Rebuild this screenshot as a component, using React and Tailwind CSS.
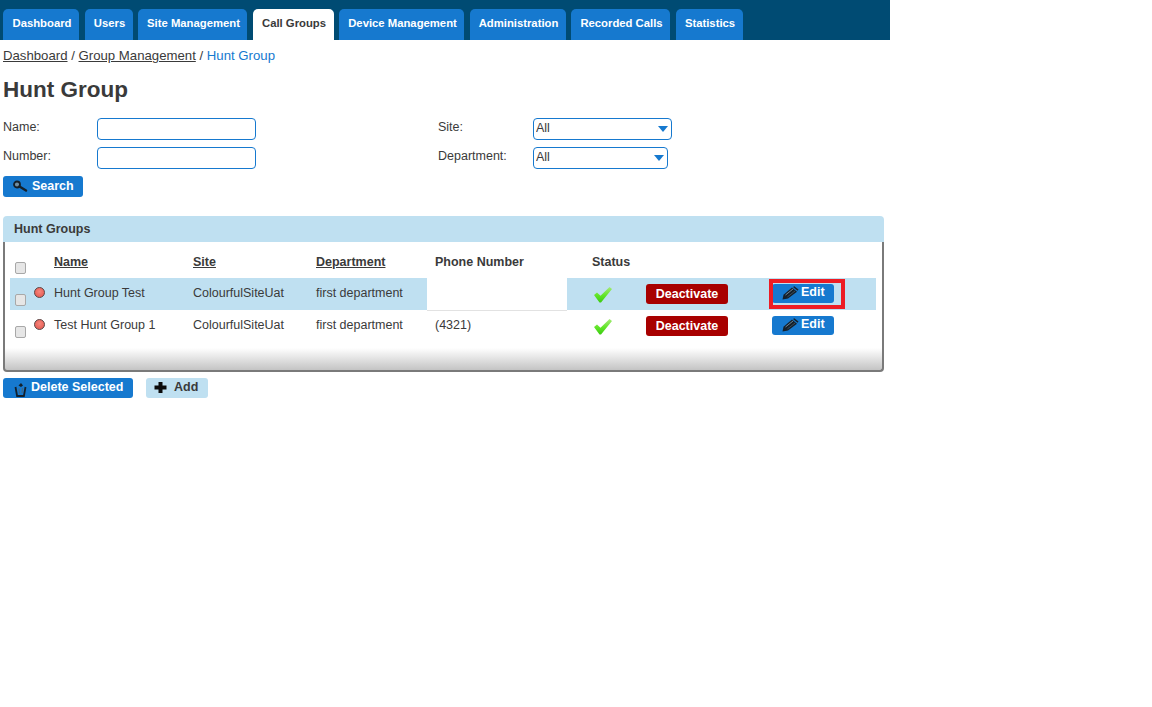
import React from 'react';

const tabs = [
  { label: 'Dashboard', width: 'w-[76px]' },
  { label: 'Users', width: 'w-[48px]' },
  { label: 'Site Management', width: 'w-[109px]' },
  { label: 'Call Groups', width: 'w-[81px]', active: true },
  { label: 'Device Management', width: 'w-[125px]' },
  { label: 'Administration', width: 'w-[96px]' },
  { label: 'Recorded Calls', width: 'w-[99px]' },
  { label: 'Statistics', width: 'w-[67px]' },
];

const rows = [
  { name: 'Hunt Group Test', site: 'ColourfulSiteUat', dept: 'first department', phone: '', selected: true },
  { name: 'Test Hunt Group 1', site: 'ColourfulSiteUat', dept: 'first department', phone: '(4321)' },
];

const SearchIcon = () => (
  <svg width="16" height="12" viewBox="0 0 16 12" className="shrink-0">
    <circle cx="5" cy="4.500" r="3" fill="#6f8ea3" stroke="#14202a" strokeWidth="1.800" />
    <path d="M7.500 6.500l6.500 4" stroke="#14202a" strokeWidth="2.400" strokeLinecap="round" />
  </svg>
);

const PencilIcon = () => (
  <svg width="17" height="14" viewBox="0 0 17 14" className="shrink-0">
    <path d="M.5 13.500l1-4.800L10 1.500l5 4.200L6 12.500z" fill="#15202b" />
    <path d="M11 .9l1.300-.7 4.200 3.300-1 1.300z" fill="#15202b" />
    <path d="M3.500 9l7.500-6" stroke="#7c93a4" strokeWidth="0.900" />
    <path d="M5.500 10.800l7.500-5.800" stroke="#4c6374" strokeWidth="0.700" />
  </svg>
);

const TrashIcon = () => (
  <svg width="13" height="15" viewBox="0 0 13 15" className="shrink-0 mt-[3px]">
    <path d="M1.500 5l1.600 9h6.800l1.600-9" fill="none" stroke="#13202c" strokeWidth="1.800" />
    <path d="M5 6.500l.5 5M8.500 6l-.5 5" stroke="#4b6476" strokeWidth="1" />
    <path d="M4.500 3.500L7 1l2 2.500-2 1.500z" fill="#13202c" />
  </svg>
);

const PlusIcon = () => (
  <svg width="13" height="13" viewBox="0 0 13 13" className="shrink-0">
    <path d="M4.500 1h4v3.500H12.500v4H8.500V12h-4V8.500H.5v-4h4z" fill="#0c0c0c" />
  </svg>
);

const CheckIcon = () => (
  <svg width="20" height="17" viewBox="0 0 20 17">
    <defs>
      <linearGradient id="tick" x1="0" y1="0" x2="0" y2="1">
        <stop offset="0" stopColor="#a6ea78" />
        <stop offset="0.55" stopColor="#5fe526" />
        <stop offset="1" stopColor="#3ccb12" />
      </linearGradient>
    </defs>
    <path d="M1 9l3-2.500 3.500 3.200L16.500 1 19 3 8 16.500h-1.500z" fill="url(#tick)" />
  </svg>
);

const StatusDot = () => (
  <span className="block w-[11px] h-[11px] rounded-full border border-[#5a4a4a] bg-[radial-gradient(circle_at_50%_40%,#f7877c,#e2524a)]" />
);

const Checkbox = ({ className = '' }) => (
  <input
    type="checkbox"
    className={`block appearance-none w-[9px] h-[10px] box-content rounded-[2px] border border-[#a8a8a8] bg-[#e6e6e6] ${className}`}
  />
);

const BlueButton = ({ children, className }) => (
  <button className={`flex items-center bg-[#1679cf] text-white font-bold rounded-[3px] text-[12.5px] ${className}`}>
    {children}
  </button>
);

const DeactivateButton = () => (
  <button className="block w-[82px] h-[20px] rounded-[3px] bg-[#a80000] text-white font-bold text-[12.5px] leading-[19px] text-center">
    Deactivate
  </button>
);

const Field = ({ label, labelWidth, children }) => (
  <div className="flex items-center">
    <label className={`${labelWidth} text-[12.5px] -mt-[3px]`}>{label}</label>
    {children}
  </div>
);

const SelectBox = ({ width }) => (
  <div className={`${width} h-[22px] relative`}>
    <select className="block appearance-none w-full h-full pl-[2px] pb-[3px] border border-[#1679cf] rounded-[4px] bg-white text-[12.5px] outline-none">
      <option>All</option>
    </select>
    <span className="absolute right-[4px] top-[8px] w-0 h-0 border-x-[5.5px] border-x-transparent border-t-[6px] border-t-[#1679cf]" />
  </div>
);

export default function App() {
  return (
    <div className="w-[1152px] min-h-[707px] bg-white text-[#3a3a3a] font-['Liberation_Sans',Arial,sans-serif]">
      <nav className="w-[890px] h-[40px] pt-[9px] pl-[3px] bg-[#004b73] flex gap-[5.5px]">
        {tabs.map(tab => (
          <a
            key={tab.label}
            className={`${tab.width} h-[31px] rounded-t-[5px] flex items-center justify-center pb-[2px] pl-[2px] text-[11.3px] font-bold ${
              tab.active ? 'bg-white text-[#3a3a3a]' : 'bg-[#1679cf] text-white'
            }`}
          >
            {tab.label}
          </a>
        ))}
      </nav>

      <main className="pl-[3px] w-[884px]">
        <div className="mt-[7px] h-[17px] text-[13.2px] leading-[17px]">
          <a className="underline">Dashboard</a> / <a className="underline">Group Management</a> /{' '}
          <span className="text-[#1679cf]">Hunt Group</span>
        </div>

        <h1 className="mt-[12px] h-[27px] text-[22.5px] leading-[27px] font-bold">Hunt Group</h1>

        <div className="mt-[15px] flex flex-col gap-[7px]">
          <div className="flex">
            <div className="w-[435px]">
              <Field label="Name:" labelWidth="w-[94px]">
                <input className="w-[159px] h-[22px] border border-[#1679cf] rounded-[4px] bg-white" />
              </Field>
            </div>
            <Field label="Site:" labelWidth="w-[95px]">
              <SelectBox width="w-[139px]" />
            </Field>
          </div>
          <div className="flex">
            <div className="w-[435px]">
              <Field label="Number:" labelWidth="w-[94px]">
                <input className="w-[159px] h-[22px] border border-[#1679cf] rounded-[4px] bg-white" />
              </Field>
            </div>
            <Field label="Department:" labelWidth="w-[95px]">
              <SelectBox width="w-[135px]" />
            </Field>
          </div>
        </div>

        <BlueButton className="mt-[7px] w-[80px] h-[21px] pl-[9px] gap-[4px] pb-[1px]">
          <SearchIcon />
          Search
        </BlueButton>

        <section className="mt-[19px] w-[881px]">
          <div className="h-[26px] pl-[11px] rounded-t-[4px] bg-[#bfe0f1] text-[12.5px] leading-[26px] font-bold">
            Hunt Groups
          </div>
          <div className="h-[130px] pt-[36px] px-[5px] border-x-2 border-b-2 border-[#7a7a7a] rounded-b-[4px] bg-[linear-gradient(to_bottom,#ffffff_0,#ffffff_106px,#c4c4c4_128px)] relative">
            <div className="absolute left-[10px] top-[20px]">
              <Checkbox />
            </div>
            <table className="w-[866px] table-fixed border-collapse text-[12.5px] -mt-[36px]">
              <colgroup>
                <col className="w-[20px]" />
                <col className="w-[24px]" />
                <col className="w-[139px]" />
                <col className="w-[123px]" />
                <col className="w-[111px]" />
                <col className="w-[140px]" />
                <col className="w-[71px]" />
                <col className="w-[126px]" />
                <col className="w-[112px]" />
              </colgroup>
              <thead>
                <tr className="h-[36px] text-left font-bold">
                  <th />
                  <th />
                  <th className="pt-[5px]"><span className="underline">Name</span></th>
                  <th className="pt-[5px]"><span className="underline">Site</span></th>
                  <th className="pt-[5px]"><span className="underline">Department</span></th>
                  <th className="pt-[5px] pl-[8px]">Phone Number</th>
                  <th className="pt-[5px] pl-[25px]">Status</th>
                  <th />
                  <th />
                </tr>
              </thead>
              <tbody>
                {rows.map(row => (
                  <tr key={row.name} className={`h-[32px] ${row.selected ? 'bg-[#bfe0f1]' : 'bg-white'}`}>
                    <td className="pl-[5px] pt-[12px]"><Checkbox /></td>
                    <td className="pl-[4px] pb-[3px]"><StatusDot /></td>
                    <td className="pb-[1px]">{row.name}</td>
                    <td className="pb-[1px]">{row.site}</td>
                    <td className="pb-[1px]">{row.dept}</td>
                    <td className={`pl-[8px] pb-[1px] ${row.selected ? 'bg-white border-b border-[#e2e2e2]' : ''}`}>{row.phone}</td>
                    <td className="pl-[26px] pt-[1px]"><CheckIcon /></td>
                    <td className="pl-[8px]"><DeactivateButton /></td>
                    <td className="pl-[8px] relative">
                      <BlueButton className="w-[62px] h-[19px] pl-[10px] gap-[2px] pb-[2px] mb-[1px]">
                        <PencilIcon />
                        Edit
                      </BlueButton>
                      {row.selected && (
                        <span className="absolute left-[5px] top-[1px] w-[76px] h-[30px] border-[4px] border-[#ed1c24]" />
                      )}
                    </td>
                  </tr>
                ))}
              </tbody>
            </table>
          </div>
        </section>

        <div className="mt-[6px] flex gap-[13px]">
          <BlueButton className="w-[130px] h-[20px] pl-[11px] gap-[4px] pb-[1px]">
            <TrashIcon />
            Delete Selected
          </BlueButton>
          <button className="flex items-center w-[62px] h-[20px] pl-[8px] gap-[7px] pb-[2px] rounded-[3px] bg-[#bfe0f1] text-[12.5px] font-bold">
            <PlusIcon />
            Add
          </button>
        </div>
      </main>
    </div>
  );
}
